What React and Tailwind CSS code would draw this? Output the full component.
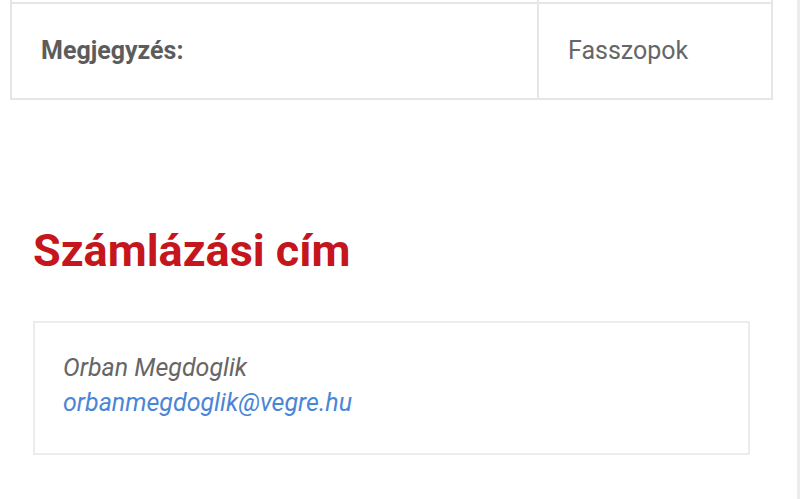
import * as React from 'react';

export default function App() {
  return (
    <div className="flex h-[499px] w-[804px] overflow-hidden bg-white font-['Roboto',sans-serif]">
      <div className="w-[797px]">
        {/* order details table, top row scrolled out of view */}
        <div className="ml-[10px] w-[763px] border-x-2 border-b-2 border-[#e6e6e6]">
          <div className="grid h-[4px] grid-cols-[527px_1fr] border-b-2 border-[#e6e6e6]">
            <div className="border-r-2 border-[#e6e6e6]" />
            <div />
          </div>
          <div className="grid h-[94px] grid-cols-[527px_1fr]">
            <div className="flex items-center border-r-2 border-[#e6e6e6] pl-[29px] text-[25px] font-bold text-[#5c5c5c]">
              Megjegyzés:
            </div>
            <div className="flex items-center pl-[29px] text-[25px] text-[#666]">Fasszopok</div>
          </div>
        </div>

        <div className="px-[33px]">
          <h2 className="mt-[126px] text-[45px] leading-[50px] font-bold text-[#c4161c]">Számlázási cím</h2>
          <div className="mt-[45px] w-[717px] border-2 border-[#ececec] px-[28px] pt-[27px] pb-[33px] text-[25px] italic leading-[35px]">
            <div className="text-[#666]">Orban Megdoglik</div>
            <div className="text-[#4a86d6]">orbanmegdoglik@vegre.hu</div>
          </div>
        </div>
      </div>
      <div className="h-full w-[3px] bg-[#ececec]" />
    </div>
  );
}
